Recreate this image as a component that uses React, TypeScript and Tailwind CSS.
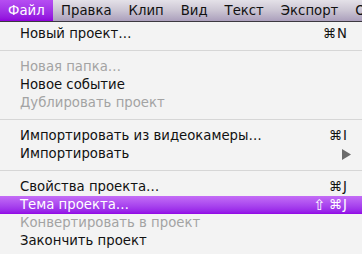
import React from "react"

type Item =
  | { sep: true }
  | { label: string; key?: string; disabled?: boolean; active?: boolean; submenu?: boolean; shift?: boolean; sep?: false }

const menus = ["Файл", "Правка", "Клип", "Вид", "Текст", "Экспорт", "Окно"]

const items: Item[] = [
  { label: "Новый проект…", key: "⌘N" },
  { sep: true },
  { label: "Новая папка…", disabled: true },
  { label: "Новое событие" },
  { label: "Дублировать проект", disabled: true },
  { sep: true },
  { label: "Импортировать из видеокамеры…", key: "⌘I" },
  { label: "Импортировать", submenu: true },
  { sep: true },
  { label: "Свойства проекта…", key: "⌘J" },
  { label: "Тема проекта…", key: "⌘J", shift: true, active: true },
  { label: "Конвертировать в проект", disabled: true },
  { label: "Закончить проект" },
]

const MenuRow = ({ item }: { item: Item }) => {
  if (item.sep) {
    return (
      <div className="flex h-[15px] items-center">
        <div className="h-px w-full bg-[#d6d6d6]" />
      </div>
    )
  }
  const color = item.active
    ? "text-white bg-gradient-to-b from-[#c46cf6] to-[#9203e6]"
    : item.disabled
      ? "text-[#a3a3a3]"
      : "text-[#111]"
  return (
    <div className={`flex h-[18px] items-center justify-between pl-5 pr-[14px] ${color}`}>
      <span>{item.label}</span>
      {item.key && (
        <span className="flex items-center tracking-[1px]">
          {item.shift && <span className="mr-[2px] text-[15px] leading-none">⇧</span>}
          {item.key}
        </span>
      )}
      {item.submenu && (
        <svg width="9" height="11" viewBox="0 0 9 11" className="mr-[-3px]">
          <path d="M0 0 L9 5.5 L0 11 Z" fill="#6b6b6b" />
        </svg>
      )}
    </div>
  )
}

export default function App() {
  return (
    <div
      className="relative h-[254px] w-[362px] overflow-hidden bg-[#f3f3f3] text-[13.25px]"
      style={{ fontFamily: "'DejaVu Sans', 'Noto Sans', sans-serif" }}
    >
      <div className="flex h-[22px] items-center whitespace-nowrap border-b border-[#3c3840] bg-gradient-to-b from-[#e4e1e8] via-[#cbc5d3] to-[#ab9fbc] text-[#111]">
        {menus.map((m, i) => (
          <div
            key={m}
            className={
              i === 0
                ? "flex h-full shrink-0 items-center bg-gradient-to-b from-[#b64ef2] to-[#8f00dc] px-2 text-white"
                : "flex h-full shrink-0 items-center px-[8.5px]"
            }
          >
            {m}
          </div>
        ))}
      </div>
      <div className="pt-[3px]">
        {items.map((it, i) => (
          <MenuRow key={i} item={it} />
        ))}
      </div>
    </div>
  )
}
